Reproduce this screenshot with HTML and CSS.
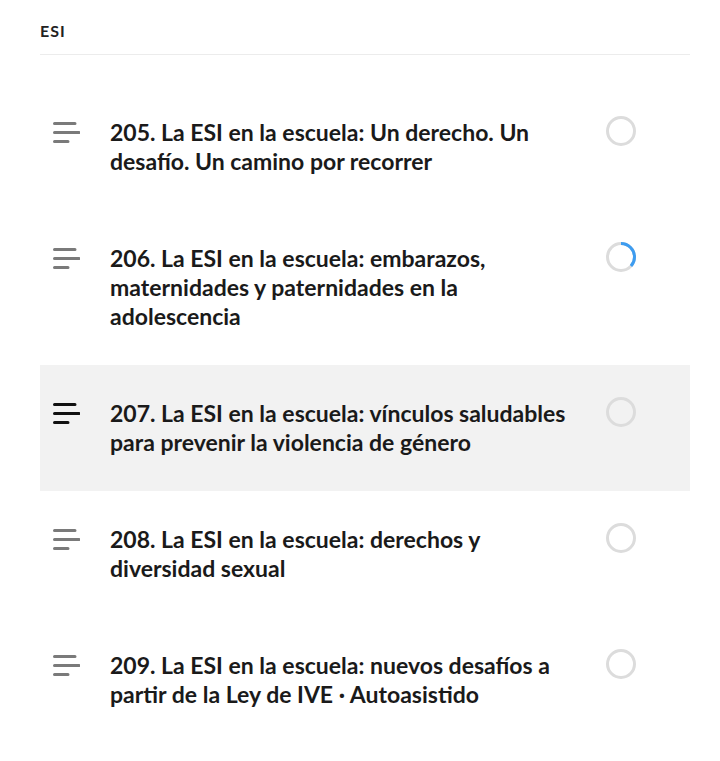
FILE: index.html
```html
<!DOCTYPE html>
<html lang="es">
<head>
    <meta charset="UTF-8">
    <meta name="viewport" content="width=device-width, initial-scale=1.0">
    <title>ESI</title>
    <link rel="stylesheet" href="styles.css">
</head>
<body>
    <div class="section">
        <h3 class="section-title">ESI</h3>
        <ul class="lessons">
            <li class="lesson">
                <svg class="lesson-icon" viewBox="0 0 28 28"><path d="M2.5 5.5H23M2.5 14.5H27M2.5 23.5H16"/></svg>
                <span class="lesson-title">205. La ESI en la escuela: Un derecho. Un desafío. Un camino por recorrer</span>
                <svg class="lesson-status" viewBox="0 0 30 30"><circle class="track" cx="15" cy="15" r="13.5"/></svg>
            </li>
            <li class="lesson">
                <svg class="lesson-icon" viewBox="0 0 28 28"><path d="M2.5 5.5H23M2.5 14.5H27M2.5 23.5H16"/></svg>
                <span class="lesson-title">206. La ESI en la escuela: embarazos, maternidades y paternidades en la adolescencia</span>
                <svg class="lesson-status" viewBox="0 0 30 30"><circle class="track" cx="15" cy="15" r="13.5"/><circle class="progress" cx="15" cy="15" r="13.5" stroke-dasharray="31 100" transform="rotate(-90 15 15)"/></svg>
            </li>
            <li class="lesson active">
                <svg class="lesson-icon" viewBox="0 0 28 28"><path d="M2.5 5.5H23M2.5 14.5H27M2.5 23.5H16"/></svg>
                <span class="lesson-title">207. La ESI en la escuela: vínculos saludables para prevenir la violencia de género</span>
                <svg class="lesson-status" viewBox="0 0 30 30"><circle class="track" cx="15" cy="15" r="13.5"/></svg>
            </li>
            <li class="lesson">
                <svg class="lesson-icon" viewBox="0 0 28 28"><path d="M2.5 5.5H23M2.5 14.5H27M2.5 23.5H16"/></svg>
                <span class="lesson-title">208. La ESI en la escuela: derechos y diversidad sexual</span>
                <svg class="lesson-status" viewBox="0 0 30 30"><circle class="track" cx="15" cy="15" r="13.5"/></svg>
            </li>
            <li class="lesson">
                <svg class="lesson-icon" viewBox="0 0 28 28"><path d="M2.5 5.5H23M2.5 14.5H27M2.5 23.5H16"/></svg>
                <span class="lesson-title">209. La ESI en la escuela: nuevos desafíos a partir de la Ley de IVE · Autoasistido</span>
                <svg class="lesson-status" viewBox="0 0 30 30"><circle class="track" cx="15" cy="15" r="13.5"/></svg>
            </li>
        </ul>
    </div>
</body>
</html>
```

FILE: styles.css
```css
body {
    margin: 0;
    background: #fff;
    font-family: Lato, 'Open Sans', sans-serif;
    color: #1a1a1a;
}

.section {
    padding: 0 30px 0 40px;
}

.section-title {
    margin: 0;
    padding: 21px 0 13px;
    font-size: 16px;
    line-height: 20px;
    font-weight: 700;
    letter-spacing: 1px;
    color: #222;
    border-bottom: 1px solid #ececec;
}

.lessons {
    list-style: none;
    margin: 29px 0 0;
    padding: 0;
}

.lesson {
    display: flex;
    align-items: flex-start;
    padding: 34px 54px 34px 12px;
}

.lesson.active {
    background: #f2f2f2;
}

.lesson-icon {
    flex: none;
    width: 28px;
    height: 28px;
    margin-top: 0;
    margin-right: 30px;
    fill: none;
    stroke: #7a7a7a;
    stroke-width: 3;
    stroke-linecap: round;
}

.lesson.active .lesson-icon {
    stroke: #111;
}

.lesson-title {
    flex: 1;
    font-size: 23px;
    line-height: 29px;
    font-weight: 700;
}

.lesson-status {
    flex: none;
    width: 30px;
    height: 30px;
    margin-top: -2px;
    margin-left: 26px;
    fill: none;
    stroke-width: 3;
}

.lesson-status .track {
    stroke: #dcdcdc;
}

.lesson-status .progress {
    stroke: #3d9cf0;
}
```
